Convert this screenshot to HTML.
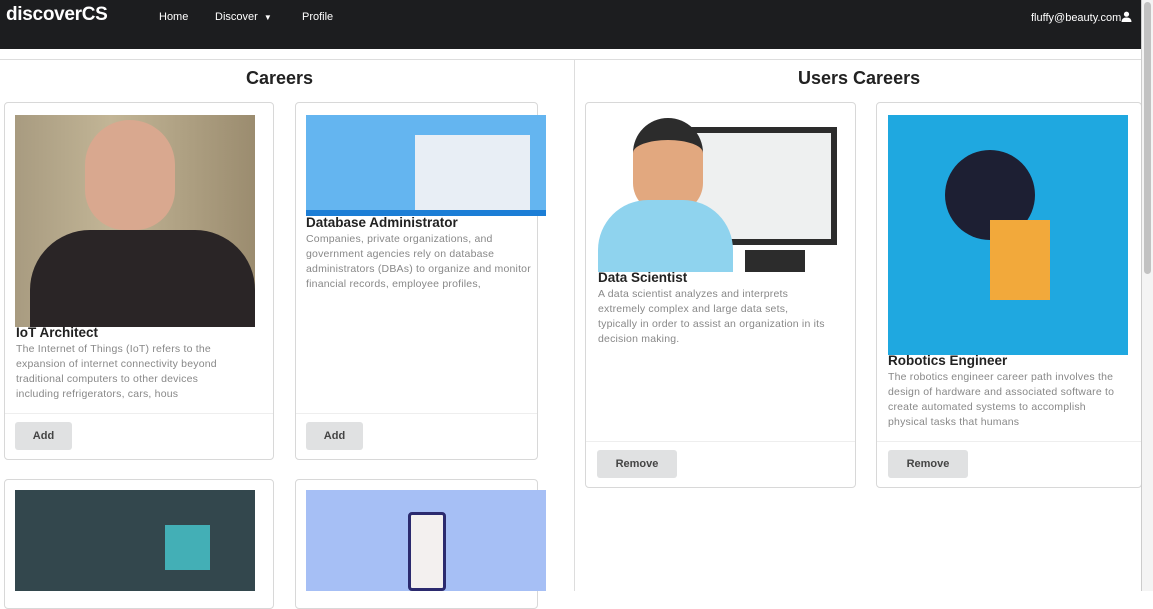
<!DOCTYPE html>
<html><head><style>
*{box-sizing:border-box;margin:0;padding:0}
body{width:1153px;height:591px;overflow:hidden;background:#fff;font-family:"Liberation Sans",sans-serif;position:relative}
.nav{position:absolute;left:0;top:0;width:1141px;height:49px;background:#1c1d1f;color:#fff}
.brand{position:absolute;left:6px;top:4px;font-size:19px;font-weight:bold;letter-spacing:-0.3px}
.nl{position:absolute;top:11px;font-size:11px}
.line{position:absolute;left:0;top:59px;width:1141px;height:1px;background:#ddd}
.vline{position:absolute;left:574px;top:60px;width:1px;height:531px;background:#ddd}
.scroll{position:absolute;left:1141px;top:0;width:12px;height:591px;background:#f4f4f4;border-left:1px solid #ccc}
.thumb{position:absolute;left:1144px;top:2px;width:7px;height:272px;background:#c2c2c2;border-radius:4px}
h2{position:absolute;font-size:18px;font-weight:bold;color:#222;top:68px}
.card{position:absolute;border:1px solid #d8d8d8;border-radius:4px;background:#fff}
.img{position:absolute}
.t{position:absolute;font-size:13.5px;font-weight:bold;color:#222;white-space:nowrap}
.d{position:absolute;font-size:10.5px;line-height:15px;color:#888;white-space:nowrap;letter-spacing:0.2px}
.ft{position:absolute;left:0;right:0;height:1px;background:#eee}
.btn{position:absolute;background:#e0e1e2;border-radius:3px;font-size:11px;font-weight:bold;color:#444;text-align:center;line-height:28px;height:28px}
</style></head><body>
<div class="nav">
<div class="brand">discoverCS</div>
<div class="nl" style="left:159px">Home</div>
<div class="nl" style="left:215px">Discover &nbsp;<span style="font-size:8px">▼</span></div>
<div class="nl" style="left:302px">Profile</div>
<div class="nl" style="left:1031px">fluffy@beauty.com<svg width="11" height="11" viewBox="0 0 11 11" style="vertical-align:-1px"><circle cx="5.5" cy="3.2" r="2.6" fill="#fff"/><path d="M0.5 11 Q0.5 6.5 5.5 6.5 Q10.5 6.5 10.5 11Z" fill="#fff"/></svg></div>
</div>
<div class="line"></div><div class="vline"></div>
<h2 style="left:246px">Careers</h2>
<h2 style="left:798px">Users Careers</h2>

<div class="card" style="left:4px;top:102px;width:270px;height:358px">
<div class="ft" style="top:310px"></div>
<div class="btn" style="left:10px;top:319px;width:57px">Add</div></div>
<div class="img" style="left:15px;top:115px;width:240px;height:212px;background:linear-gradient(90deg,#a89b80,#c2b596 40%,#9b8c6f);"></div>
<div class="img" style="left:85px;top:120px;width:90px;height:110px;background:#d9a88f;border-radius:45px 45px 40px 40px"></div>
<div class="img" style="left:30px;top:230px;width:225px;height:97px;background:#2a2526;border-radius:60px 60px 0 0"></div>
<div class="t" style="left:16px;top:325px">IoT Architect</div>
<div class="d" style="left:16px;top:342px">The Internet of Things (IoT) refers to the<br>expansion of internet connectivity beyond<br>traditional computers to other devices<br>including refrigerators, cars, hous</div>

<div class="card" style="left:295px;top:102px;width:243px;height:358px">
<div class="ft" style="top:310px"></div>
<div class="btn" style="left:10px;top:319px;width:57px">Add</div></div>
<div class="img" style="left:306px;top:115px;width:240px;height:101px;background:#64b5f0"></div>
<div class="img" style="left:415px;top:135px;width:115px;height:76px;background:#e8eef5"></div>
<div class="img" style="left:306px;top:210px;width:240px;height:6px;background:#1c7ed6"></div>
<div class="t" style="left:306px;top:215px">Database Administrator</div>
<div class="d" style="left:306px;top:232px">Companies, private organizations, and<br>government agencies rely on database<br>administrators (DBAs) to organize and monitor<br>financial records, employee profiles,</div>

<div class="card" style="left:585px;top:102px;width:271px;height:386px">
<div class="ft" style="top:338px"></div>
<div class="btn" style="left:11px;top:347px;width:80px">Remove</div></div>
<div class="img" style="left:685px;top:127px;width:152px;height:118px;background:#eef0f0;border:6px solid #2c2c2c"></div>
<div class="img" style="left:745px;top:250px;width:60px;height:22px;background:#2c2c2c"></div>
<div class="img" style="left:633px;top:118px;width:70px;height:95px;background:#e2a87f;border-radius:35px 35px 30px 30px;border-top:22px solid #2c2c2c"></div>
<div class="img" style="left:598px;top:200px;width:135px;height:72px;background:#8fd3ee;border-radius:50px 50px 0 0"></div>
<div class="t" style="left:598px;top:270px">Data Scientist</div>
<div class="d" style="left:598px;top:287px">A data scientist analyzes and interprets<br>extremely complex and large data sets,<br>typically in order to assist an organization in its<br>decision making.</div>

<div class="card" style="left:876px;top:102px;width:266px;height:386px">
<div class="ft" style="top:338px"></div>
<div class="btn" style="left:11px;top:347px;width:80px">Remove</div></div>
<div class="img" style="left:888px;top:115px;width:240px;height:240px;background:#1fa8e0"></div>
<div class="img" style="left:945px;top:150px;width:90px;height:90px;background:#1d1f33;border-radius:50%"></div>
<div class="img" style="left:990px;top:220px;width:60px;height:80px;background:#f2a93b"></div>
<div class="t" style="left:888px;top:353px">Robotics Engineer</div>
<div class="d" style="left:888px;top:370px">The robotics engineer career path involves the<br>design of hardware and associated software to<br>create automated systems to accomplish<br>physical tasks that humans</div>

<div class="card" style="left:4px;top:479px;width:270px;height:130px"></div>
<div class="img" style="left:15px;top:490px;width:240px;height:101px;background:#33474d"></div>
<div class="img" style="left:165px;top:525px;width:45px;height:45px;background:#47c9d1;opacity:.8"></div>
<div class="card" style="left:295px;top:479px;width:243px;height:130px"></div>
<div class="img" style="left:306px;top:490px;width:240px;height:101px;background:#a6bff5"></div>
<div class="img" style="left:408px;top:512px;width:38px;height:79px;background:#f3f0ef;border:3px solid #2b2a6e;border-radius:4px"></div>

<div class="scroll"></div><div class="thumb"></div>
</body></html>
